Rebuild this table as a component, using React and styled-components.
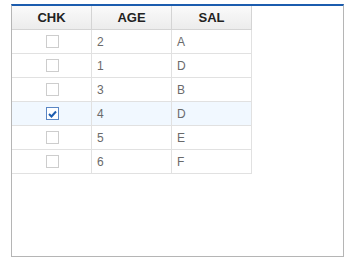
import React from 'react';
import styled, { createGlobalStyle } from 'styled-components';

const GlobalStyle = createGlobalStyle`
  html, body {
    margin: 0;
    padding: 0;
    background: #fff;
  }
  body {
    font-family: 'Liberation Sans', Arial, sans-serif;
  }
`;

const Page = styled.div`
  padding: 4px 0 0 11px;
`;

const Grid = styled.div`
  box-sizing: border-box;
  width: 333px;
  height: 253px;
  border: 1px solid #b5b5b5;
  border-top: 2px solid #1b5cae;
  background: #fff;
`;

const Row = styled.div`
  display: grid;
  grid-template-columns: repeat(3, 80px);
  width: max-content;
  height: 24px;
`;

const HeadCell = styled.div`
  box-sizing: border-box;
  display: flex;
  align-items: center;
  justify-content: center;
  border-right: 1px solid #d4d4d4;
  border-bottom: 1px solid #d4d4d4;
  background: linear-gradient(#fafafa, #ececec);
  color: #222;
  font-size: 13px;
  font-weight: bold;
`;

const Cell = styled.div`
  box-sizing: border-box;
  display: flex;
  align-items: center;
  justify-content: ${(p) => (p.$center ? 'center' : 'flex-start')};
  padding-left: ${(p) => (p.$center ? '0' : '5px')};
  border-right: 1px solid #e1e1e1;
  border-bottom: 1px solid #e1e1e1;
  background: ${(p) => (p.$selected ? '#f1f8ff' : '#fff')};
  color: #6a6a6a;
  font-size: 12px;
`;

const Check = styled.span`
  box-sizing: border-box;
  display: inline-flex;
  align-items: center;
  justify-content: center;
  width: 13px;
  height: 13px;
  margin-left: 1px;
  border: 1px solid ${(p) => (p.$on ? '#5a86c4' : '#cdcdcd')};
  background: #fff;
`;

const rows = [
  { age: 2, sal: 'A' },
  { age: 1, sal: 'D' },
  { age: 3, sal: 'B' },
  { age: 4, sal: 'D', checked: true },
  { age: 5, sal: 'E' },
  { age: 6, sal: 'F' },
];

const Checkbox = ({ checked }) => (
  <Check $on={checked}>
    {checked && (
      <svg width="9" height="8" viewBox="0 0 9 8">
        <path d="M1 4 L3.5 6.5 L8 1.5" fill="none" stroke="#1d5db0" strokeWidth="2" />
      </svg>
    )}
  </Check>
);

const App = () => (
  <Page>
    <GlobalStyle />
    <Grid>
      <Row>
        <HeadCell>CHK</HeadCell>
        <HeadCell>AGE</HeadCell>
        <HeadCell>SAL</HeadCell>
      </Row>
      {rows.map((r) => (
        <Row key={r.age}>
          <Cell $center $selected={r.checked}>
            <Checkbox checked={r.checked} />
          </Cell>
          <Cell $selected={r.checked}>{r.age}</Cell>
          <Cell $selected={r.checked}>{r.sal}</Cell>
        </Row>
      ))}
    </Grid>
  </Page>
);

export default App;
